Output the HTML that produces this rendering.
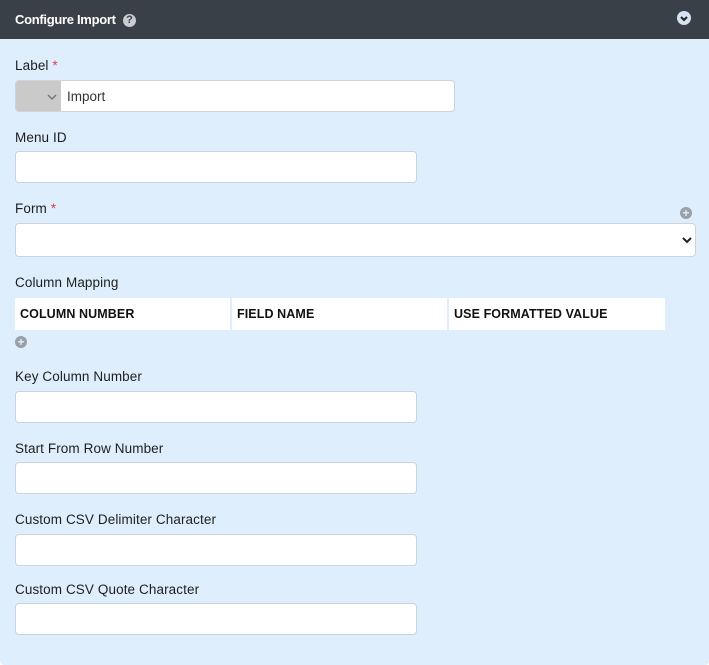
<!DOCTYPE html>
<html><head><style>
*{box-sizing:border-box;margin:0;padding:0}
body{width:709px;height:665px;background:#fff;font-family:"Liberation Sans",sans-serif;overflow:hidden;position:relative}
.wrap{position:absolute;left:0;top:0;width:709px;height:665px;background:#deeefd;border-radius:0 0 4px 4px}
.hdr{position:absolute;left:0;top:0;width:709px;height:39px;background:#3a4048}
.t{position:absolute;left:15px;top:12px;color:#fff;font-weight:bold;font-size:13px;letter-spacing:-0.3px}
.lbl{position:absolute;left:15px;font-size:13.5px;color:#1e1e1e;letter-spacing:0.1px}
.req{color:#e0404a}
.in{position:absolute;left:15px;background:#fff;border:1px solid #ccd3da;border-radius:4px;height:32px}
.ic{position:absolute;width:12px;height:12px;border-radius:50%;background:#9aa0a6;color:#deeefd;font-size:12px;line-height:12px;text-align:center;font-weight:bold}
.th{position:absolute;top:298px;height:32px;background:#fff;font-weight:bold;font-size:12.5px;color:#111;padding:9px 0 0 5px;letter-spacing:0.1px}
</style></head><body><div class="wrap">
<div class="hdr"><div class="t">Configure Import</div>
<div style="position:absolute;left:123px;top:14px;width:13px;height:13px;border-radius:50%;background:#c9ccd0;color:#3a4048;font-size:11px;font-weight:bold;text-align:center;line-height:13px">?</div>
<div style="position:absolute;left:677px;top:11px;width:14px;height:14px;border-radius:50%;background:#d6e2ef"><svg width="14" height="14" style="position:absolute;left:0;top:0"><path d="M4 6 L7 9 L10 6" stroke="#1a1e24" stroke-width="2" fill="none"/></svg></div>
</div>
<div class="lbl" style="top:58px">Label <span class="req">*</span></div>
<div class="in" style="top:80px;width:440px;overflow:hidden"><div style="position:absolute;left:0;top:0;width:45px;height:30px;background:#cacaca"><svg width="10" height="8" style="position:absolute;left:31px;top:13px"><path d="M1 1L5 5L9 1" stroke="#777" stroke-width="1.5" fill="none"/></svg></div><span style="position:absolute;left:51px;top:8px;font-size:13.5px;color:#333">Import</span></div>
<div class="lbl" style="top:130px">Menu ID</div>
<div class="in" style="top:151px;width:402px"></div>
<div class="lbl" style="top:201px">Form <span class="req">*</span></div>
<div class="ic" style="left:680px;top:207px">+</div>
<div class="in" style="top:223px;width:681px;height:34px"><svg width="10" height="8" style="position:absolute;left:666px;top:13px"><path d="M1 1L5 5L9 1" stroke="#222" stroke-width="2" fill="none"/></svg></div>
<div class="lbl" style="top:275px">Column Mapping</div>
<div class="th" style="left:15px;width:215px">COLUMN NUMBER</div>
<div class="th" style="left:232px;width:215px">FIELD NAME</div>
<div class="th" style="left:449px;width:216px">USE FORMATTED VALUE</div>
<div class="ic" style="left:15px;top:336px">+</div>
<div class="lbl" style="top:369px">Key Column Number</div>
<div class="in" style="top:391px;width:402px"></div>
<div class="lbl" style="top:441px">Start From Row Number</div>
<div class="in" style="top:462px;width:402px"></div>
<div class="lbl" style="top:512px">Custom CSV Delimiter Character</div>
<div class="in" style="top:534px;width:402px"></div>
<div class="lbl" style="top:582px">Custom CSV Quote Character</div>
<div class="in" style="top:603px;width:402px"></div>
</div></body></html>
